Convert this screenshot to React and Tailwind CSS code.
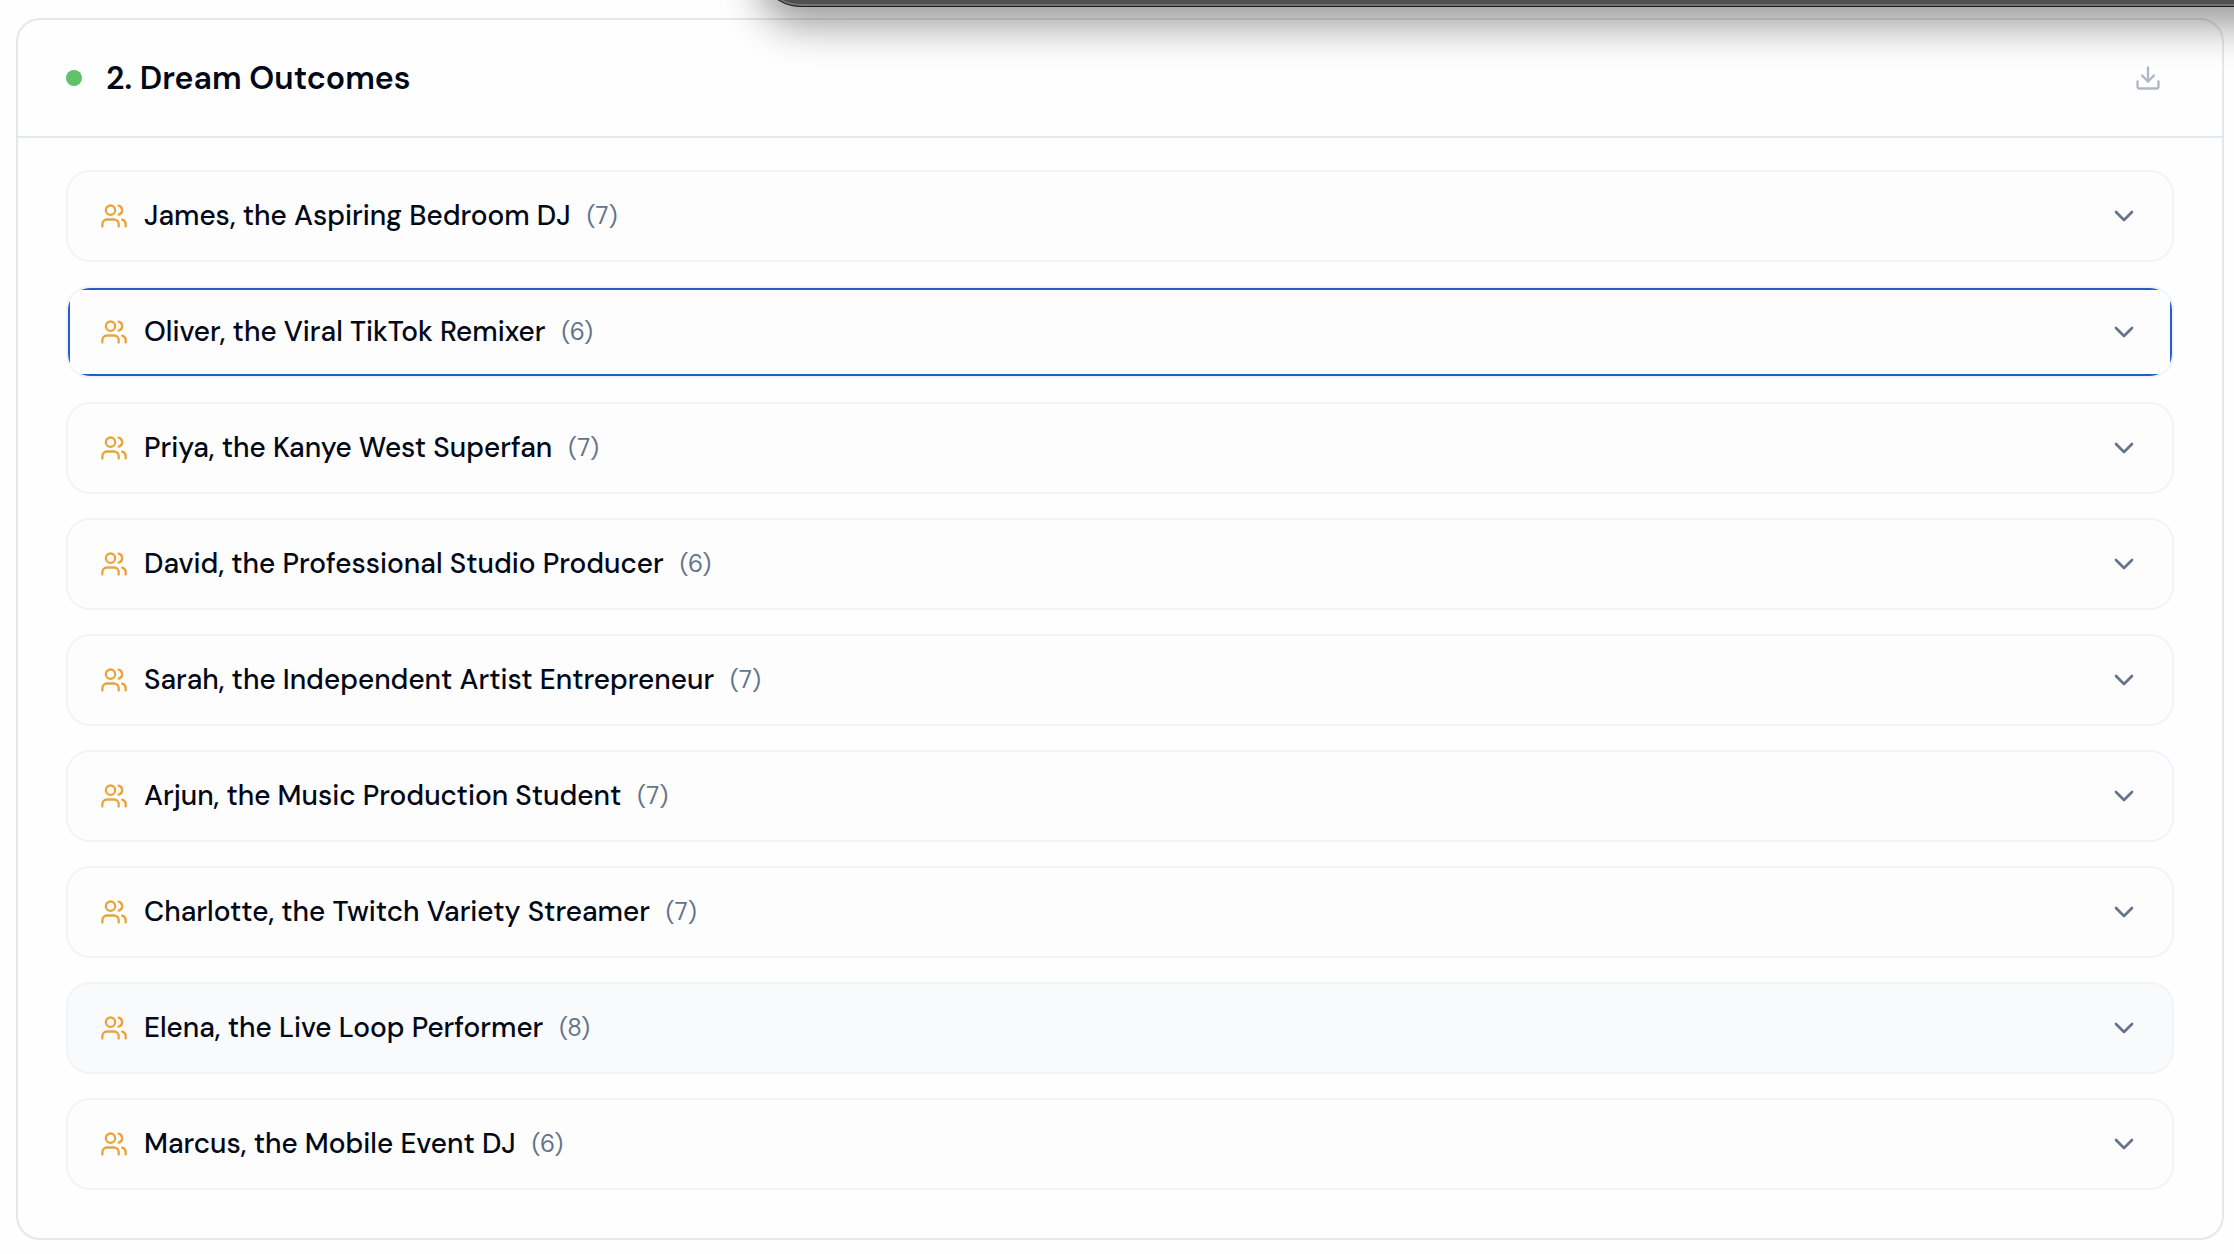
import React from "react";
import { ChevronDown, Download, Users } from "lucide-react";

const personas = [
    { name: "James, the Aspiring Bedroom DJ", count: 7 },
    { name: "Oliver, the Viral TikTok Remixer", count: 6 },
    { name: "Priya, the Kanye West Superfan", count: 7 },
    { name: "David, the Professional Studio Producer", count: 6 },
    { name: "Sarah, the Independent Artist Entrepreneur", count: 7 },
    { name: "Arjun, the Music Production Student", count: 7 },
    { name: "Charlotte, the Twitch Variety Streamer", count: 7 },
    { name: "Elena, the Live Loop Performer", count: 8 },
    { name: "Marcus, the Mobile Event DJ", count: 6 },
];

function PersonaRow({ persona, focused, highlighted }) {
    return (
        <li className="border-2 border-[#f0f3f7] rounded-3xl overflow-hidden">
            <button
                type="button"
                aria-expanded="false"
                className={`w-full flex items-center justify-between px-8 py-6 outline-2 -outline-offset-2 ${focused ? "outline-[#245fc9]" : "outline-transparent"} ${highlighted ? "bg-[#f9fafc]" : "bg-[#fdfdfd]"}`}
            >
                <span className="flex items-center gap-4">
                    <Users size={28} className="text-[#eba33c]" />
                    <span className="flex items-center gap-4">
                        <span className="text-[28px] leading-10 font-medium text-[#020817]">{persona.name}</span>
                        <span className="text-2xl leading-10 text-[#64748b]">({persona.count})</span>
                    </span>
                </span>
                <ChevronDown size={32} className="text-[#64748b]" />
            </button>
        </li>
    );
}

export default function App() {
    const focusedRow = 1;
    const hoveredRow = 7;

    return (
        <div className="relative min-h-screen overflow-hidden bg-[#fefefe] pt-[18px] pb-3.5 pl-4 pr-2.5 font-['DM_Sans',Inter,sans-serif]">
            <section className="border-2 border-[#e3e8ed] rounded-3xl">
                <header className="flex items-center justify-between px-12 py-8 border-b-2 border-[#e3e8ed]">
                    <div className="flex items-center gap-6">
                        <span className="size-4 rounded-full bg-[#5fc26b]" />
                        <h2 className="text-[32px] leading-10 font-semibold text-[#020817]">2. Dream Outcomes</h2>
                    </div>
                    <button type="button" aria-label="Download" className="p-3 text-[#64748b] opacity-50">
                        <Download size={28} />
                    </button>
                </header>

                <ul className="flex flex-col gap-6 px-12 pt-8 pb-12">
                    {personas.map((persona, index) => (
                        <PersonaRow
                            key={persona.name}
                            persona={persona}
                            focused={index === focusedRow}
                            highlighted={index === hoveredRow}
                        />
                    ))}
                </ul>
            </section>

            {/* bottom edge of the floating window */}
            <div className="absolute -top-[193px] left-[34%] -right-20 h-[200px] rounded-bl-[40px] border border-[#1c1c1c] bg-[#505050] shadow-[inset_0_-2px_0_#737373,0_18px_40px_rgba(0,0,0,0.4)]" />
        </div>
    );
}
